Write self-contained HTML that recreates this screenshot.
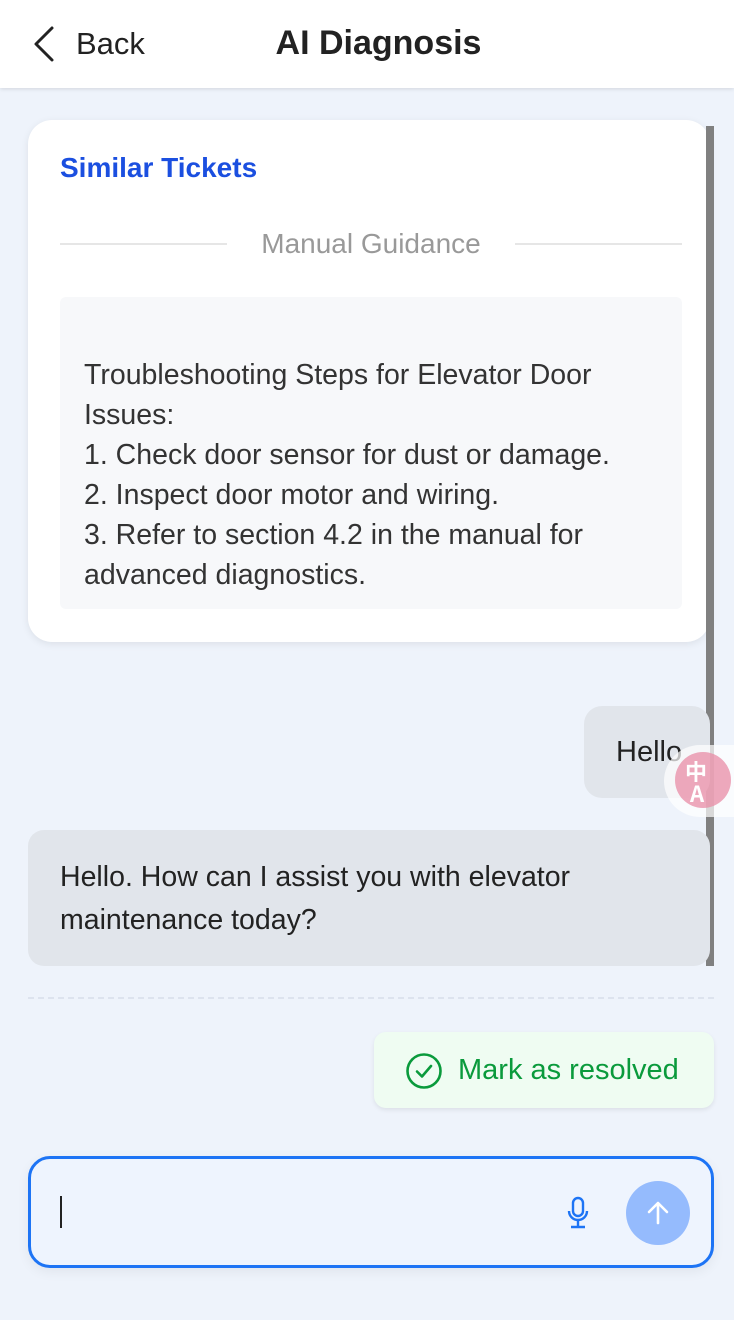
<!DOCTYPE html>
<html><head><style>
*{box-sizing:border-box;margin:0;padding:0}
body{width:734px;height:1320px;background:#eef3fb;font-family:"Liberation Sans",sans-serif;position:relative;overflow:hidden;color:#222}
.hdr{position:absolute;left:0;top:0;width:734px;height:88px;background:#fff;box-shadow:0 1px 4px rgba(0,0,0,.12)}
.abs{position:absolute}
</style></head><body>
<div class="hdr">
<svg class="abs" style="left:30px;top:25px" width="26" height="38"><path d="M22 3 L6 19 L22 35" fill="none" stroke="#222" stroke-width="3" stroke-linecap="round" stroke-linejoin="round"/></svg>
<div class="abs" style="left:76px;top:26px;font-size:31px">Back</div>
<div class="abs" style="left:0;width:757px;text-align:center;top:24px;font-size:34px;font-weight:bold">AI Diagnosis</div>
</div>
<div class="abs" style="left:28px;top:120px;width:682px;height:522px;background:#fff;border-radius:24px;box-shadow:0 2px 8px rgba(0,0,0,.08)"></div>
<div class="abs" style="left:60px;top:152px;font-size:28px;font-weight:bold;color:#1b4fe0">Similar Tickets</div>
<div class="abs" style="left:60px;top:243px;width:167px;height:2px;background:#e6e6e6"></div>
<div class="abs" style="left:515px;top:243px;width:167px;height:2px;background:#e6e6e6"></div>
<div class="abs" style="left:227px;width:288px;text-align:center;top:228px;font-size:28px;color:#999">Manual Guidance</div>
<div class="abs" style="left:60px;top:297px;width:622px;height:312px;background:#f7f8fa;border-radius:6px;padding:58px 20px 0 24px;font-size:28.5px;line-height:40px;color:#333">Troubleshooting Steps for Elevator Door Issues:<br>1. Check door sensor for dust or damage.<br>2. Inspect door motor and wiring.<br>3. Refer to section 4.2 in the manual for advanced diagnostics.</div>
<div class="abs" style="left:706px;top:126px;width:8px;height:840px;background:#808080"></div>
<div class="abs" style="left:584px;top:706px;width:126px;height:92px;background:#e1e5eb;border-radius:18px;padding:30px 0 0 32px;font-size:29px">Hello</div>
<div class="abs" style="left:664px;top:745px;width:80px;height:72px;background:rgba(255,255,255,.7);border-radius:36px 0 0 36px"></div>
<div class="abs" style="left:675px;top:752px;width:56px;height:56px;border-radius:50%;background:rgba(232,140,165,.75);color:#fff;font:bold 22px 'Noto Sans CJK SC',sans-serif;padding:8px 0 0 10px;line-height:22px">中<br>&nbsp;A</div>
<div class="abs" style="left:28px;top:830px;width:682px;height:136px;background:#e1e5eb;border-radius:16px;padding:26px 32px;font-size:28.5px;line-height:43px;color:#222">Hello. How can I assist you with elevator maintenance today?</div>
<div class="abs" style="left:28px;top:997px;width:686px;border-top:2px dashed #dde3ee"></div>
<div class="abs" style="left:374px;top:1032px;width:340px;height:76px;background:#effcf2;border-radius:12px;box-shadow:0 2px 5px rgba(0,0,0,.08)"></div>
<svg class="abs" style="left:405px;top:1052px" width="38" height="38"><circle cx="19" cy="19" r="16.5" fill="none" stroke="#0a9a3c" stroke-width="2.6"/><path d="M12 19.5 L17 24.5 L26 14" fill="none" stroke="#0a9a3c" stroke-width="2.6" stroke-linecap="round" stroke-linejoin="round"/></svg>
<div class="abs" style="left:458px;top:1054px;font-size:29px;color:#0a9a3c">Mark as resolved</div>
<div class="abs" style="left:28px;top:1156px;width:686px;height:112px;border:3px solid #1d74f5;border-radius:22px;background:#eef4fe;box-shadow:0 4px 12px rgba(0,0,0,.06)"></div>
<div class="abs" style="left:60px;top:1196px;width:2px;height:32px;background:#222"></div>
<svg class="abs" style="left:566px;top:1196px" width="24" height="34"><rect x="7" y="2" width="10" height="18" rx="5" fill="none" stroke="#1d74f5" stroke-width="2.4"/><path d="M3 15 a9 9 0 0 0 18 0 M12 24 V30 M5 31 H19" fill="none" stroke="#1d74f5" stroke-width="2.4"/></svg>
<div class="abs" style="left:626px;top:1181px;width:64px;height:64px;border-radius:50%;background:#95bbfd"></div>
<svg class="abs" style="left:642px;top:1197px" width="32" height="32"><path d="M16 26 V6 M7 15 L16 6 L25 15" fill="none" stroke="#fff" stroke-width="2.6" stroke-linecap="round" stroke-linejoin="round"/></svg>
</body></html>
